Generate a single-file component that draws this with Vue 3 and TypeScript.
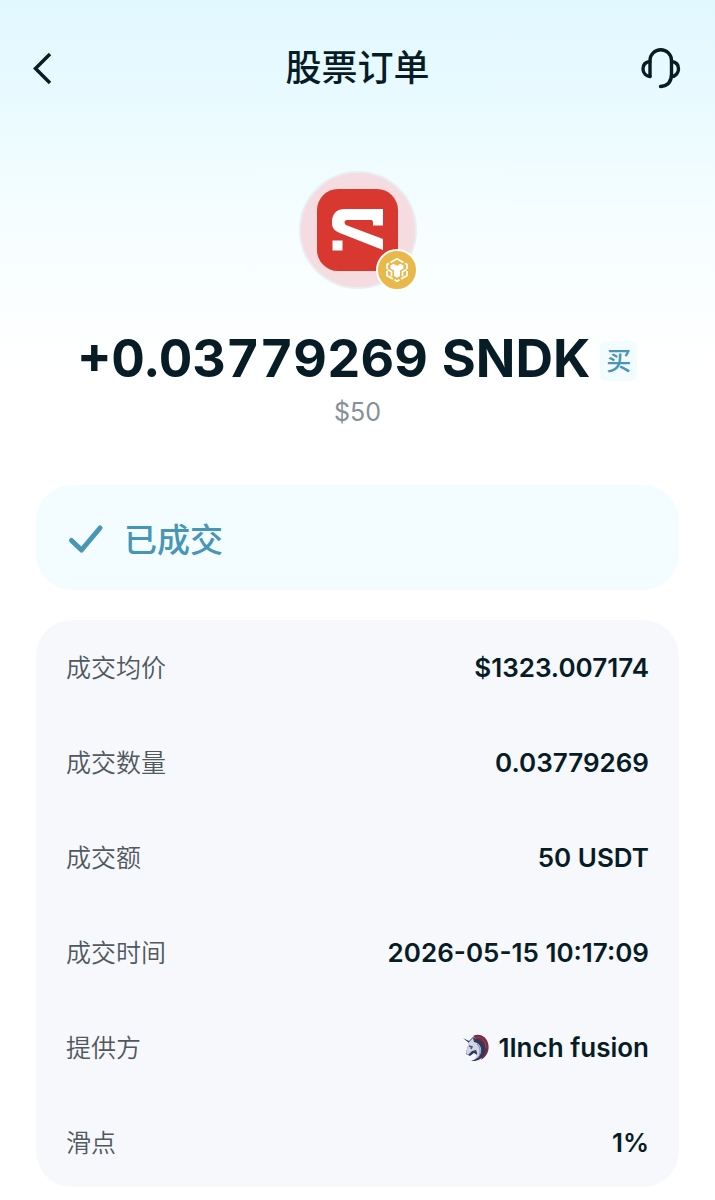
<script setup lang="ts">
interface Detail {
  label: string
  value: string
  provider?: boolean
}

const details: Detail[] = [
  { label: '成交均价', value: '$1323.007174' },
  { label: '成交数量', value: '0.03779269' },
  { label: '成交额', value: '50 USDT' },
  { label: '成交时间', value: '2026-05-15 10:17:09' },
  { label: '提供方', value: '1Inch fusion', provider: true },
  { label: '滑点', value: '1%' },
]
</script>

<template>
  <div class="page">
    <header class="bar">
      <button class="icon-button" type="button" aria-label="返回">
        <svg width="24" height="40" viewBox="0 0 24 40" fill="none" stroke="#081c26" stroke-width="3.500">
          <path d="M20 6 5.500 20.500 20 35" />
        </svg>
      </button>
      <h1 class="title">股票订单</h1>
      <button class="icon-button end" type="button" aria-label="客服">
        <svg width="44" height="44" viewBox="0 0 44 44" fill="none" stroke="#081c26" stroke-width="3.400" stroke-linecap="round" stroke-linejoin="round">
          <path d="M9 30V14.500a10.500 10.500 0 0 1 21.500 0V28c0 8-4 12-11 12.500" />
          <path d="M9 15.500c-4.500.5-7 3.500-7 7.500s3 7 7 7.500" />
          <path d="M30.500 15.500c4.500.5 7 3.500 7 7.500s-3 7.500-7 7.500" />
        </svg>
      </button>
    </header>

    <main>
      <section class="summary">
        <div class="token">
          <svg class="token-logo" viewBox="0 0 118 118">
            <circle cx="59" cy="59" r="58" fill="#f5dce0" stroke="#e9eef2" stroke-width="2" />
            <rect x="18" y="18" width="81" height="82" rx="21" fill="#d93831" />
            <path fill="#fff" d="M84 38V54.500H74V51q0-2-2-2H48q-2.500 0-2.500 2.500 0 2 2 2.800L84 68V79L42 62.500C35.500 60 33 57 33 52v-1c0-8.500 5-13 13-13ZM33.500 69.500H43.500V79.500H33.500Z" />
          </svg>
          <svg class="chain-badge" viewBox="0 0 42 42">
            <circle cx="21" cy="21" r="20" fill="#e8b84a" stroke="#fff" stroke-width="2" />
            <g fill="none" stroke="#fff" stroke-width="1.800" stroke-linejoin="round">
              <path d="M14.500 13.500 21 9.800l6.500 3.700M11 20v-4.500l2-1.200M31 20v-4.500l-2-1.200M11 22v4.500l6 3.500M31 22v4.500L25 30M18.500 30.800l2.500 1.500 2.500-1.500" />
              <path d="m11.500 20.500 4 2.300v4.400M30.500 20.500l-4 2.300v4.400" />
            </g>
            <path fill="#fff" d="m14.500 16.500 3-1.700 3.500 2 3.500-2 3 1.700v3L24 21.500V27l-3 1.800L18 27v-5.500L14.500 19.500Z" />
          </svg>
        </div>
        <div class="amount-line">
          <strong class="amount">+0.03779269 SNDK</strong>
          <span class="side">买</span>
        </div>
        <p class="fiat">$50</p>
      </section>

      <section class="status">
        <svg width="40" height="40" viewBox="0 0 40 40" fill="none" stroke="#4796b5" stroke-width="5" stroke-linecap="round" stroke-linejoin="round">
          <path d="m5.500 22.500 10 9.500L34 10" />
        </svg>
        <span>已成交</span>
      </section>

      <dl class="details">
        <div v-for="item in details" :key="item.label" class="row">
          <dt>{{ item.label }}</dt>
          <dd>
            <svg v-if="item.provider" width="28" height="28" viewBox="0 0 28 28" aria-hidden="true">
              <path fill="#702f43" d="M11 2C17-1 24 2 26 9c2 7-1 13-7 17 3-6 2-12-1-17Z" />
              <path fill="#34385a" d="M1 4l6 3 4-4 3 2c7 1 11 7 9 14-1 4-5 7-10 8H9c4-1 6-3 6-6l-3-2-4 3-4-2 1-5 2-6Z" />
              <path fill="#cfd6e8" d="m7 8 4-4 1 4c5 1 8 5 7 10-1 4-4 7-8 8 4-3 5-6 3-10l-4 1-4 4-2-2 2-8Z" />
              <path d="m7 12 3 1-1 2" fill="none" stroke="#4b526f" stroke-width="1.500" />
              <path d="M15 10c4 4 4 9 1 14" fill="none" stroke="#7983a6" stroke-width="1" />
              <path d="M14 3c6 0 10 4 10 11" fill="none" stroke="#a64050" stroke-width="1" />
            </svg>
            <span>{{ item.value }}</span>
          </dd>
        </div>
      </dl>
    </main>
  </div>
</template>

<style>
body {
  margin: 0;
  background: #fff;
}
</style>

<style scoped>
.page {
  box-sizing: border-box;
  min-height: 100vh;
  padding: 40px 36px 13px;
  background: linear-gradient(#e0f8ff 0, #ebfbff 120px, #f7feff 240px, #fff 370px);
  color: #081c26;
  font-family: Inter, "Noto Sans CJK SC", sans-serif;
}

.bar {
  display: grid;
  grid-template-columns: 44px 1fr 44px;
  align-items: center;
  height: 56px;
  margin: 0 -6px;
}

.icon-button {
  display: flex;
  padding: 0;
  border: 0;
  background: none;
  cursor: pointer;
}

.end {
  justify-content: flex-end;
}

.title {
  margin: 0;
  font-size: 36px;
  line-height: 56px;
  font-weight: 500;
  text-align: center;
}

.summary {
  display: flex;
  flex-direction: column;
  align-items: center;
  padding-top: 75px;
}

.token {
  position: relative;
  width: 118px;
  height: 118px;
}

.token-logo {
  display: block;
  width: 100%;
}

.chain-badge {
  position: absolute;
  right: -1px;
  bottom: -2px;
  width: 42px;
}

.amount-line {
  display: flex;
  align-items: center;
  gap: 10px;
  margin-top: 38px;
}

.amount {
  font-size: 52px;
  line-height: 64px;
  font-weight: 700;
  font-variant-numeric: tabular-nums;
  white-space: nowrap;
}

.side {
  margin-top: 4px;
  padding: 0 6px;
  border-radius: 6px;
  background: #f2fcff;
  color: #4796b5;
  font-size: 25px;
  line-height: 40px;
  font-weight: 500;
}

.fiat {
  margin: 5px 0 0;
  color: #879096;
  font-size: 25px;
  line-height: 32px;
}

.status {
  display: flex;
  align-items: center;
  gap: 18px;
  height: 105px;
  margin-top: 57px;
  padding: 0 30px;
  border-radius: 36px;
  background: #f3fcff;
  color: #4796b5;
  font-size: 33px;
  font-weight: 500;
}

.details {
  display: grid;
  gap: 69px;
  margin: 30px 0 0;
  padding: 35px 30px 31px;
  border-radius: 36px;
  background: #f6f8fb;
}

.row {
  display: flex;
  align-items: center;
  justify-content: space-between;
  height: 26px;
  font-size: 25px;
  line-height: 26px;
}

dt {
  color: #50595e;
  font-weight: 350;
}

dd {
  display: flex;
  align-items: center;
  gap: 8px;
  margin: 0;
  font-size: 26px;
  font-weight: 600;
}
</style>
